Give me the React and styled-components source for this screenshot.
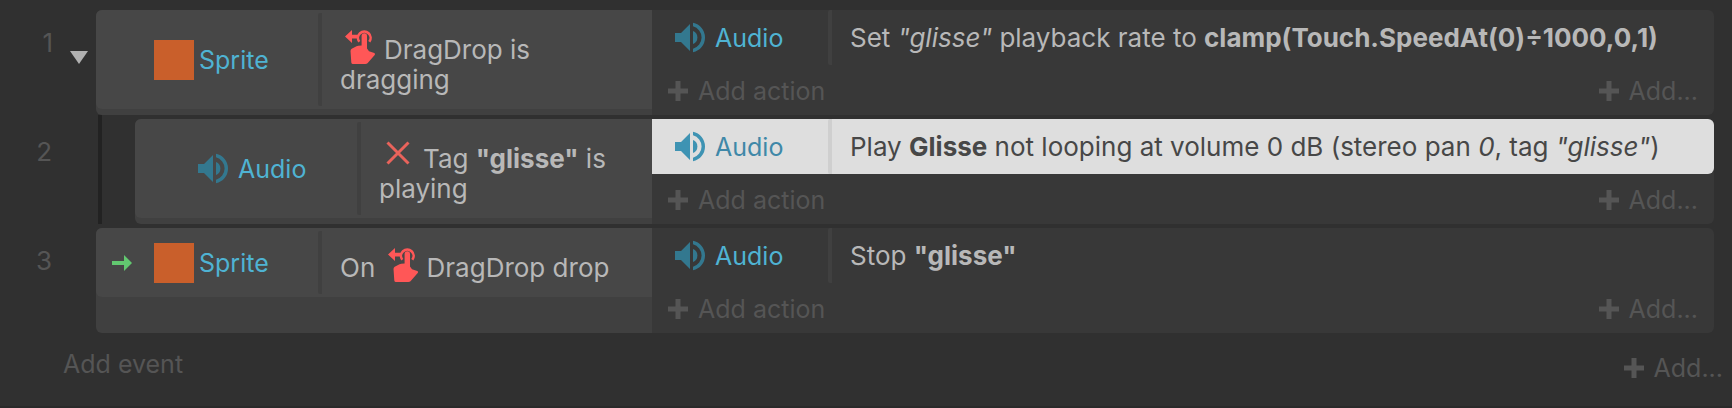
import React, { useState } from 'react'
import styled, { createGlobalStyle } from 'styled-components'

const GlobalStyle = createGlobalStyle`
  * {
    box-sizing: border-box;
  }
  body {
    margin: 0;
    background: #303030;
    color: #b8b8b8;
    font-family: Inter, "Liberation Sans", sans-serif;
    font-size: 25px;
    line-height: 30px;
  }
`

const Sheet = styled.main`
  display: flex;
  flex-direction: column;
  min-height: 100vh;
  padding-top: 10px;
  border-bottom: 2px solid #2a2a2a;
`

const EventRow = styled.section`
  display: grid;
  grid-template-columns: minmax(0, 326fr) minmax(0, 531fr);
  padding-right: 18px;
  margin-bottom: 4px;
`

const EventLeft = styled.div`
  display: flex;
`

const Gutter = styled.div`
  display: flex;
  align-items: flex-start;
  justify-content: flex-end;
  flex: none;
  width: 96px;
  padding: 18px 8px 0 0;
`

const EventNumber = styled.span`
  color: #555;
  font-size: 26px;
  margin-right: ${props => props.$alone ? 36 : 17}px;
`

const Toggle = styled.button`
  display: flex;
  padding: 0;
  margin-top: 23px;
  border: 0;
  background: none;
  color: #b0b0b0;
  cursor: pointer;
`

const Guide = styled.div`
  flex: none;
  width: 37px;
  margin: -4px 0 0 2px;
  border-left: 4px solid #222;
`

const Conditions = styled.div`
  flex: 1;
  min-width: 0;
  background: #404040;
  border-radius: 6px 0 0 6px;
`

const Condition = styled.div`
  display: flex;
  background: #474747;
  border-radius: 6px 0 0 6px;
`

const ConditionObject = styled.div`
  display: flex;
  align-items: center;
  gap: 5px;
  flex: none;
  width: 222px;
`

const TriggerSlot = styled.span`
  display: flex;
  flex: none;
  width: 53px;
  padding-left: 16px;
`

const Divider = styled.span`
  flex: none;
  width: 4px;
  margin: ${props => props.$inset ? '3px 0' : '0'};
  background: ${props => props.$selected ? '#cfcfcf' : '#404040'};
  border-radius: 2px 0 0 2px;
`

const ConditionText = styled.div`
  flex: 1;
  min-width: 0;
  padding: 12px 18px 14px;
  font-size: 26px;

  svg {
    margin: 3px 4px 0 0;
    vertical-align: -6px;
  }
`

const ObjectName = styled.span`
  color: ${props => props.$selected ? '#3f88a8' : '#4fb3d3'};
`

const Swatch = styled.span`
  flex: none;
  width: 40px;
  height: 40px;
  background: #c95f2b;
`

const Actions = styled.div`
  display: flex;
  flex-direction: column;
  background: #383838;
  border-radius: 0 6px 6px 0;
`

const Action = styled.div`
  display: flex;
  min-height: 55px;
  background: ${props => props.$selected ? '#dedede' : 'transparent'};
  color: ${props => props.$selected ? '#474747' : 'inherit'};
  border-radius: 0 6px 6px 0;
`

const ActionObject = styled.div`
  display: flex;
  align-items: center;
  gap: 5px;
  flex: none;
  width: 176px;
  padding-left: 18px;
`

const ActionText = styled.div`
  align-self: center;
  padding: 0 18px;
  font-size: 26px;
`

const AddBar = styled.div`
  display: flex;
  align-items: center;
  justify-content: space-between;
  height: 50px;
  padding: 2px 16px 0;
`

const AddButton = styled.button`
  display: flex;
  align-items: center;
  gap: 10px;
  padding: 0;
  border: 0;
  background: none;
  color: #555;
  font: inherit;
  cursor: pointer;
  &:hover {
    color: #888;
  }
`

const Footer = styled.footer`
  display: flex;
  align-items: flex-start;
  justify-content: space-between;
  padding: 12px 9px 0 63px;

  ${AddButton}:last-child {
    margin-top: 4px;
  }
`

const AudioIcon = ({ selected }) => (
  <svg width="40" height="40" viewBox="0 0 40 40" fill={selected ? '#3e93b3' : '#33788f'} aria-hidden="true">
    <path d="M5 15h6l9-9v27l-9-9H5z" />
    <path d="M23 13a7 7 0 0 1 0 13z" />
    <path d="M23 4.800A15 15 0 0 1 23 34.200v-3.500A11.600 11.600 0 0 0 23 8.300z" />
  </svg>
)

const DragIcon = () => (
  <svg width="40" height="40" viewBox="0 -2 40 40" fill="#ff5757" aria-hidden="true">
    <path d="M5 9.500L12 3v4.800h6v3.600h-6V16z" />
    <path d="M19.300 14.800A6.300 6.300 0 1 1 29.300 14.800" fill="none" stroke="#ff5757" strokeWidth="2.600" />
    <path d="M21.600 9a2.700 2.700 0 0 1 5.400 0v12.500l2 2.700L34.300 26q1.300.8.4 2L27.500 36.300q-.8.700-2 .700H13q-1.500 0-1.700-1.500L10.500 24q0-1.500 1.200-2.200l4.800-2.500q1-.5 5.100-.8z" />
  </svg>
)

const CrossIcon = () => (
  <svg width="40" height="40" viewBox="0 -2 40 40" fill="none" stroke="#e9635b" strokeWidth="3" aria-hidden="true">
    <path d="M8.500 6.500l21 21M29.500 6.500l-21 21" />
  </svg>
)

const TriggerArrow = () => (
  <svg width="20" height="16" viewBox="0 0 20 16" fill="#62c870" aria-hidden="true">
    <path d="M0 6h12V0l8 8-8 8v-6H0z" />
  </svg>
)

const PlusIcon = () => (
  <svg width="20" height="20" viewBox="0 0 20 20" fill="currentColor" aria-hidden="true">
    <path d="M7.500 0h5v7.500H20v5h-7.500V20h-5v-7.500H0v-5h7.500z" />
  </svg>
)

const CaretIcon = () => (
  <svg width="18" height="13" viewBox="0 0 18 13" fill="currentColor" aria-hidden="true">
    <path d="M0 0h18L9 13z" />
  </svg>
)

const objects = {
  Sprite: () => <Swatch />,
  Audio: AudioIcon
}

const events = [
  {
    id: 1,
    parent: true,
    object: 'Sprite',
    condition: <><DragIcon />DragDrop is dragging</>,
    action: <>Set <i>"glisse"</i> playback rate to <b>clamp(Touch.SpeedAt(0)÷1000,0,1)</b></>
  },
  {
    id: 2,
    child: true,
    object: 'Audio',
    condition: <><CrossIcon />Tag <b>"glisse"</b> is playing</>,
    action: <>Play <b>Glisse</b> not looping at volume 0 dB (stereo pan <i>0</i>, tag <i>"glisse"</i>)</>
  },
  {
    id: 3,
    trigger: true,
    object: 'Sprite',
    condition: <>On <DragIcon />DragDrop drop</>,
    action: <>Stop <b>"glisse"</b></>
  }
]

function Event(props) {

    const { event, selected, onSelect, onToggle } = props
    const ObjectIcon = objects[event.object]

    return (
        <EventRow>
            <EventLeft>
                <Gutter>
                    <EventNumber $alone={!event.parent}>{event.id}</EventNumber>
                    {event.parent && <Toggle aria-label="Toggle sub-events" onClick={onToggle}><CaretIcon /></Toggle>}
                </Gutter>
                {event.child && <Guide />}
                <Conditions>
                    <Condition>
                        <ConditionObject>
                            <TriggerSlot>{event.trigger && <TriggerArrow />}</TriggerSlot>
                            <ObjectIcon />
                            <ObjectName>{event.object}</ObjectName>
                        </ConditionObject>
                        <Divider $inset />
                        <ConditionText>{event.condition}</ConditionText>
                    </Condition>
                </Conditions>
            </EventLeft>
            <Actions>
                <Action $selected={selected} onClick={onSelect}>
                    <ActionObject>
                        <AudioIcon selected={selected} />
                        <ObjectName $selected={selected}>Audio</ObjectName>
                    </ActionObject>
                    <Divider $selected={selected} />
                    <ActionText>{event.action}</ActionText>
                </Action>
                <AddBar>
                    <AddButton><PlusIcon />Add action</AddButton>
                    <AddButton><PlusIcon />Add...</AddButton>
                </AddBar>
            </Actions>
        </EventRow>
    )
}

export default function App() {

    const [selected, setSelected] = useState(2)
    const [open, setOpen] = useState(true)

    return (
        <Sheet>
            <GlobalStyle />
            {events.filter(x => open || !x.child).map(x => (
                <Event
                    key={x.id}
                    event={x}
                    selected={selected === x.id}
                    onSelect={() => setSelected(x.id)}
                    onToggle={() => setOpen(!open)}
                />
            ))}
            <Footer>
                <AddButton>Add event</AddButton>
                <AddButton><PlusIcon />Add...</AddButton>
            </Footer>
        </Sheet>
    )
}
